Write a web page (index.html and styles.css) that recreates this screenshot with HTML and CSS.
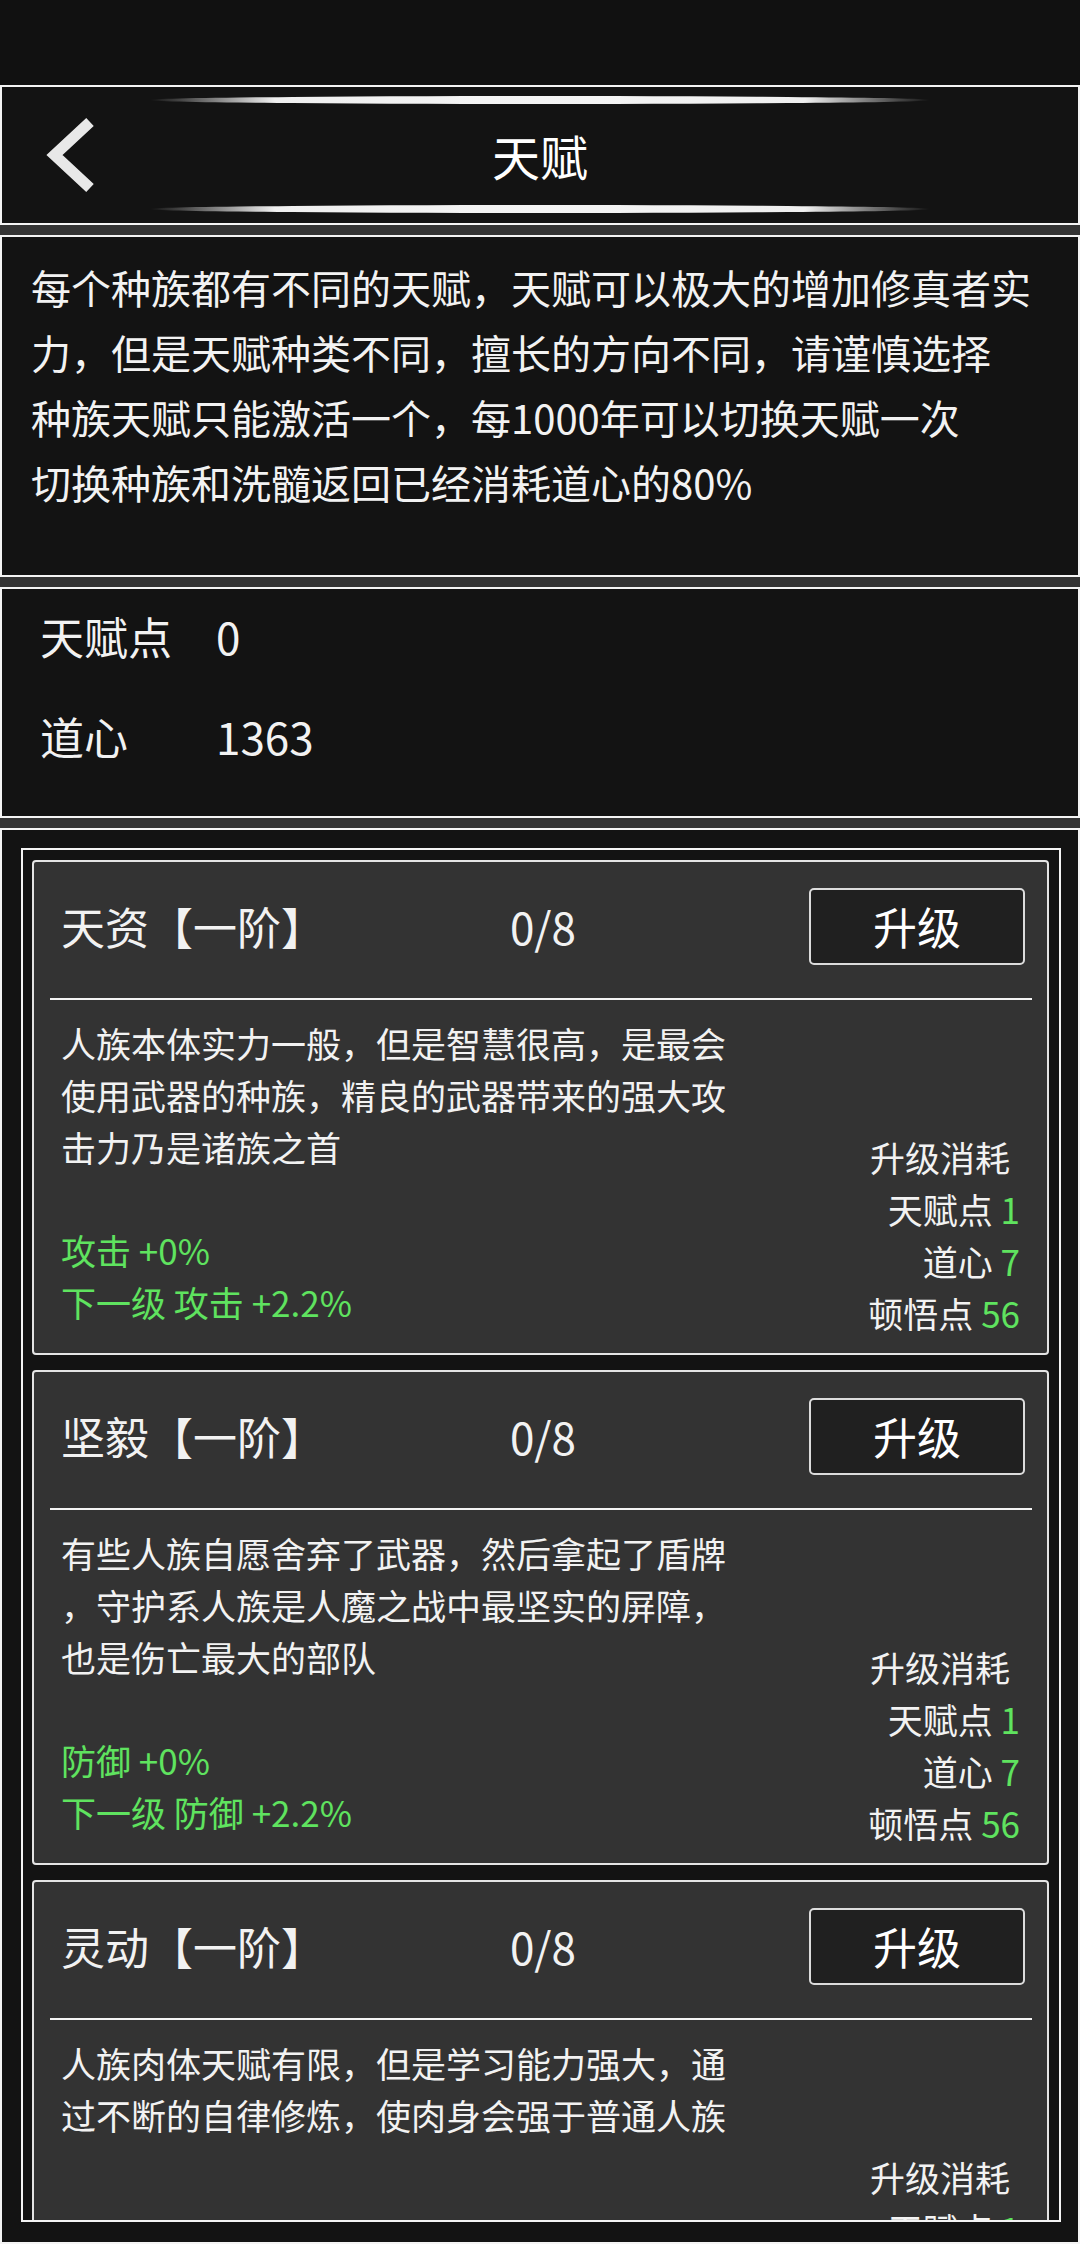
FILE: index.html
```html
<!DOCTYPE html>
<html lang="zh-CN">
<head>
<meta charset="utf-8">
<title>天赋</title>
<link rel="stylesheet" href="styles.css">
</head>
<body>
<div class="status"></div>
<div class="page">
  <header class="panel topbar">
    <div class="deco deco-top"></div>
    <button class="back" aria-label="返回">
      <svg width="52" height="76" viewBox="0 0 52 76"><path d="M44 5 L8.5 38 L44 71" fill="none" stroke="#e8e8e8" stroke-width="11" stroke-linejoin="miter"/></svg>
    </button>
    <h1 class="title">天赋</h1>
    <div class="deco deco-bottom"></div>
  </header>

  <section class="panel intro">
    <p>每个种族都有不同的天赋，天赋可以极大的增加修真者实<br>力，但是天赋种类不同，擅长的方向不同，请谨慎选择<br>种族天赋只能激活一个，每1000年可以切换天赋一次<br>切换种族和洗髓返回已经消耗道心的80%</p>
  </section>

  <section class="panel stats">
    <div class="stat"><span class="stat-label">天赋点</span><span class="stat-value">0</span></div>
    <div class="stat"><span class="stat-label">道心</span><span class="stat-value">1363</span></div>
  </section>

  <section class="panel talents">
    <div class="talent-frame">
      <article class="card">
        <div class="card-head">
          <span class="card-title">天资【一阶】</span>
          <span class="card-count">0/8</span>
          <button class="upgrade">升级</button>
        </div>
        <div class="divider"></div>
        <div class="card-body">
          <div class="card-left">
            <p class="card-desc">人族本体实力一般，但是智慧很高，是最会<br>使用武器的种族，精良的武器带来的强大攻<br>击力乃是诸族之首</p>
            <div class="card-effect">
              <div>攻击 +0%</div>
              <div>下一级 攻击 +2.2%</div>
            </div>
          </div>
          <div class="card-right">
            <div class="cost-title">升级消耗</div>
            <div>天赋点 <span class="num">1</span></div>
            <div>道心 <span class="num">7</span></div>
            <div>顿悟点 <span class="num">56</span></div>
          </div>
        </div>
      </article>

      <article class="card">
        <div class="card-head">
          <span class="card-title">坚毅【一阶】</span>
          <span class="card-count">0/8</span>
          <button class="upgrade">升级</button>
        </div>
        <div class="divider"></div>
        <div class="card-body">
          <div class="card-left">
            <p class="card-desc">有些人族自愿舍弃了武器，然后拿起了盾牌<br>，守护系人族是人魔之战中最坚实的屏障，<br>也是伤亡最大的部队</p>
            <div class="card-effect">
              <div>防御 +0%</div>
              <div>下一级 防御 +2.2%</div>
            </div>
          </div>
          <div class="card-right">
            <div class="cost-title">升级消耗</div>
            <div>天赋点 <span class="num">1</span></div>
            <div>道心 <span class="num">7</span></div>
            <div>顿悟点 <span class="num">56</span></div>
          </div>
        </div>
      </article>

      <article class="card">
        <div class="card-head">
          <span class="card-title">灵动【一阶】</span>
          <span class="card-count">0/8</span>
          <button class="upgrade">升级</button>
        </div>
        <div class="divider"></div>
        <div class="card-body">
          <div class="card-left">
            <p class="card-desc">人族肉体天赋有限，但是学习能力强大，通<br>过不断的自律修炼，使肉身会强于普通人族</p>
            <div class="card-effect">
              <div>速度 +0%</div>
              <div>下一级 速度 +2.2%</div>
            </div>
          </div>
          <div class="card-right">
            <div class="cost-title">升级消耗</div>
            <div>天赋点 <span class="num">1</span></div>
            <div>道心 <span class="num">7</span></div>
            <div>顿悟点 <span class="num">56</span></div>
          </div>
        </div>
      </article>
    </div>
  </section>
</div>
</body>
</html>
```

FILE: styles.css
```css
* { box-sizing: border-box; }

html, body {
  margin: 0;
  padding: 0;
}

body {
  width: 1080px;
  height: 2244px;
  overflow: hidden;
  background: #111111;
  color: #f2f2f2;
  font-family: "Noto Sans CJK SC", "Noto Sans", sans-serif;
}

.status {
  height: 85px;
  background: #111111;
}

.page {
  display: flex;
  flex-direction: column;
  gap: 10px;
  background: #343434;
}

.panel {
  border: 2px solid #f4f4f4;
  background: #131313;
}

/* header */
.topbar {
  height: 140px;
  padding-top: 9px;
  display: grid;
  grid-template-columns: 148px 780px 1fr;
  grid-template-rows: 8px 101px 8px;
}

.deco {
  grid-column: 2;
  height: 8px;
  border-radius: 50%;
  background: linear-gradient(90deg,
    rgba(240,240,240,0) 0%,
    rgba(240,240,240,0.35) 6%,
    #efefef 16%,
    #f4f4f4 50%,
    #efefef 84%,
    rgba(240,240,240,0.35) 94%,
    rgba(240,240,240,0) 100%);
}
.deco-top { grid-row: 1; }
.deco-bottom { grid-row: 3; }

.back {
  grid-column: 1;
  grid-row: 2;
  align-self: center;
  justify-self: start;
  margin-left: 44px;
  padding: 0;
  border: 0;
  background: none;
  display: flex;
}

.title {
  grid-column: 2;
  grid-row: 2;
  align-self: center;
  justify-self: center;
  margin: 0;
  font-size: 48px;
  font-weight: 400;
  line-height: 1;
  color: #ffffff;
}

/* intro */
.intro {
  height: 342px;
  padding: 18px 20px 0 29px;
}
.intro p {
  margin: 0;
  font-size: 40px;
  line-height: 65px;
  white-space: nowrap;
}

/* stats */
.stats {
  height: 231px;
  padding-left: 38px;
  display: flex;
  flex-direction: column;
  gap: 6px;
}
.stat {
  display: grid;
  grid-template-columns: 176px auto;
  font-size: 44px;
  line-height: 94px;
  height: 94px;
}

/* talents */
.talents {
  height: 1416px;
  padding: 18px 17px 20px 19px;
}
.talent-frame {
  height: 1374px;
  border: 2px solid #f4f4f4;
  overflow: hidden;
  padding: 10px 10px 0 9px;
  display: flex;
  flex-direction: column;
  gap: 15px;
}

.card {
  flex-shrink: 0;
  height: 495px;
  border: 2px solid #e4e4e4;
  border-radius: 4px;
  background: #333333;
  display: flex;
  flex-direction: column;
}

.card-head {
  height: 128px;
  padding: 0 22px 0 27px;
  display: grid;
  grid-template-columns: 1fr auto 1fr;
  align-items: center;
  font-size: 44px;
}
.card-title { justify-self: start; white-space: nowrap; }
.card-count { justify-self: center; }
.upgrade {
  justify-self: end;
  width: 216px;
  height: 77px;
  border: 2px solid #dcdcdc;
  border-radius: 5px;
  background: #202020;
  color: #ffffff;
  font-family: inherit;
  font-size: 44px;
  line-height: 1;
  padding: 0;
}

.divider {
  height: 2px;
  margin: 8px 15px 0 16px;
  background: #f4f4f4;
}

.card-body {
  flex: 1;
  display: flex;
  justify-content: space-between;
  padding: 17px 27px 0 27px;
  font-size: 35px;
  line-height: 52px;
}

.card-left {
  display: flex;
  flex-direction: column;
  justify-content: space-between;
  padding-bottom: 25px;
}
.card-desc {
  margin: 0;
  white-space: nowrap;
}
.card-effect {
  color: #5fe35f;
  white-space: nowrap;
}

.card-right {
  display: flex;
  flex-direction: column;
  justify-content: flex-end;
  text-align: right;
  padding-bottom: 14px;
  white-space: nowrap;
}
.cost-title { padding-right: 10px; }
.num { color: #5fe35f; }
```
